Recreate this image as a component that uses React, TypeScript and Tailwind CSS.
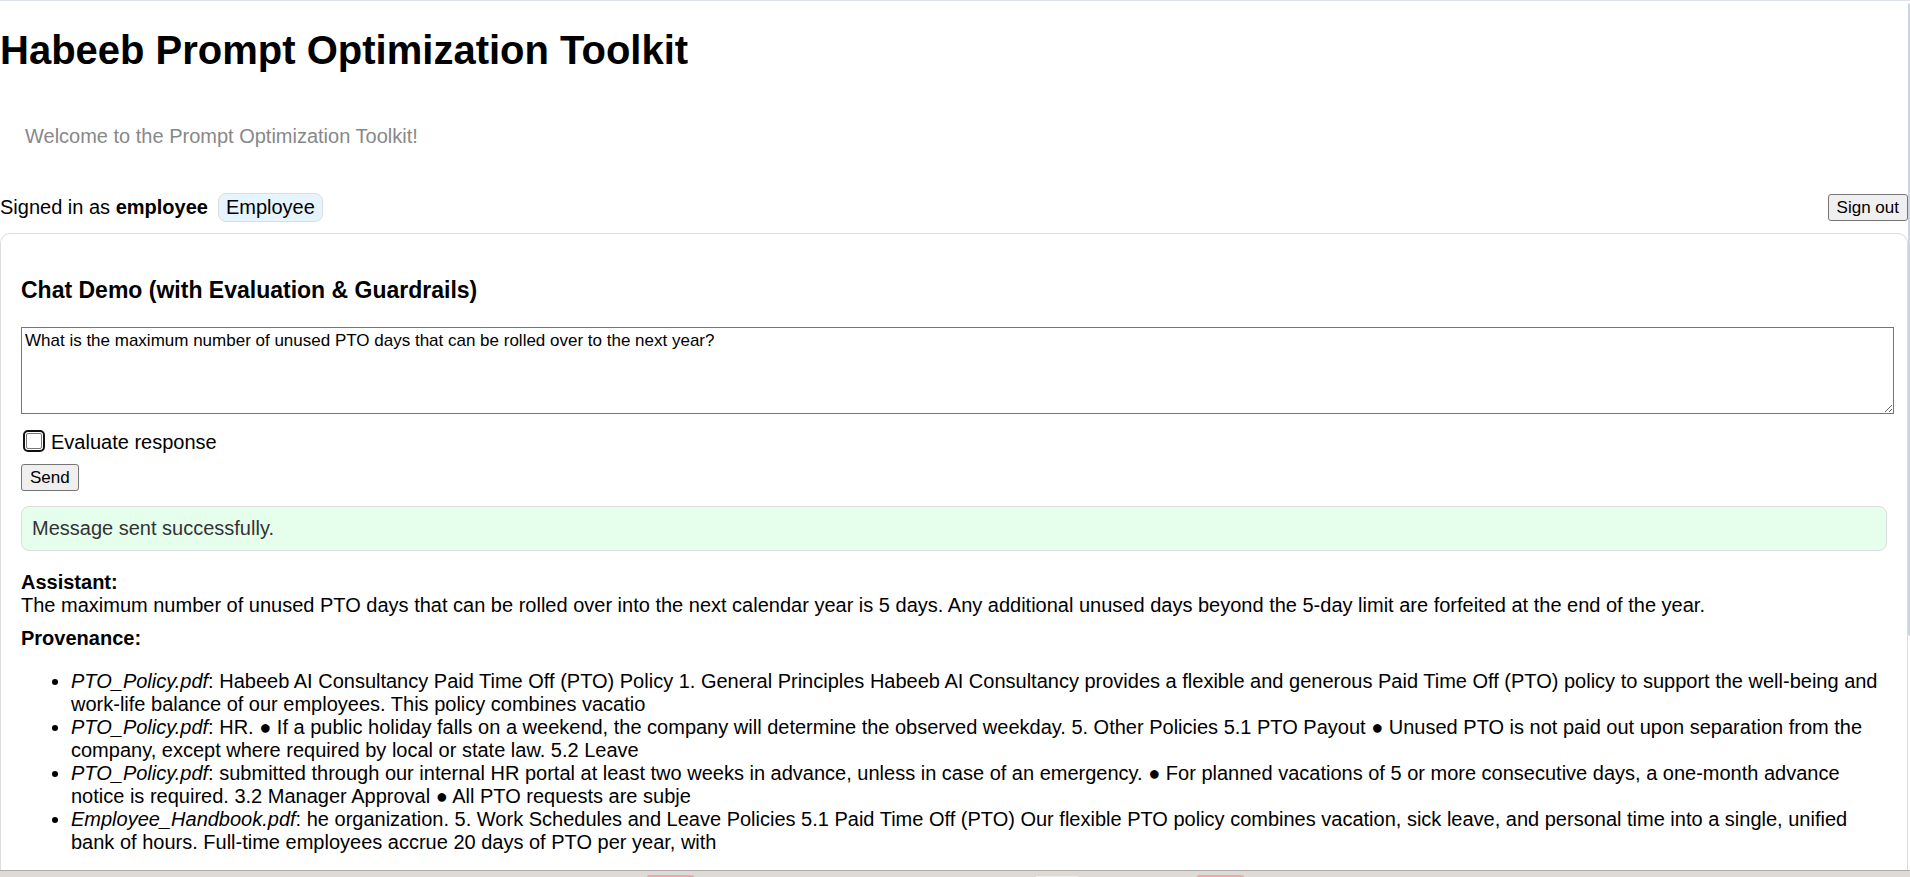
import { useState } from "react";

const sources = [
  {
    file: "PTO_Policy.pdf",
    text: "Habeeb AI Consultancy Paid Time Off (PTO) Policy 1. General Principles Habeeb AI Consultancy provides a flexible and generous Paid Time Off (PTO) policy to support the well-being and work-life balance of our employees. This policy combines vacatio",
  },
  {
    file: "PTO_Policy.pdf",
    text: "HR. ● If a public holiday falls on a weekend, the company will determine the observed weekday. 5. Other Policies 5.1 PTO Payout ● Unused PTO is not paid out upon separation from the company, except where required by local or state law. 5.2 Leave",
  },
  {
    file: "PTO_Policy.pdf",
    text: "submitted through our internal HR portal at least two weeks in advance, unless in case of an emergency. ● For planned vacations of 5 or more consecutive days, a one-month advance notice is required. 3.2 Manager Approval ● All PTO requests are subje",
  },
  {
    file: "Employee_Handbook.pdf",
    text: "he organization. 5. Work Schedules and Leave Policies 5.1 Paid Time Off (PTO) Our flexible PTO policy combines vacation, sick leave, and personal time into a single, unified bank of hours. Full-time employees accrue 20 days of PTO per year, with",
  },
];

const buttonClass =
  "h-[27px] rounded-[3px] border border-[#767676] bg-[#efefef] px-2 text-[17px] leading-[19px] text-black";

export default function App() {
  const [message, setMessage] = useState(
    "What is the maximum number of unused PTO days that can be rolled over to the next year?",
  );
  const [evaluate, setEvaluate] = useState(false);

  return (
    <div className="flex min-h-screen flex-col bg-white font-['Liberation_Sans',Arial,sans-serif] text-[20px] leading-[23px] text-black">
      <div className="flex flex-1 border-t border-[#dde1ea]">
        <div className="flex min-w-0 flex-1 flex-col">
          <h1 className="mt-[26px] text-[40px] leading-[46px] font-bold">
            Habeeb Prompt Optimization Toolkit
          </h1>
          <p className="mt-[27px] p-[25px] text-[#888888]">
            Welcome to the Prompt Optimization Toolkit!
          </p>
          <div className="mt-5 mb-[11px] flex items-center justify-between">
            <div className="flex items-center">
              <span>
                Signed in as <strong>employee</strong>
              </span>
              <span className="ml-[10px] rounded-[8px] border border-[#dddddd] bg-[#e6f4ff] px-[7px] py-[3px] leading-[21px]">
                Employee
              </span>
            </div>
            <button type="button" className={buttonClass}>
              Sign out
            </button>
          </div>

          <main className="flex-1 rounded-t-[10px] border border-b-0 border-[#dddddd] px-5 pt-5 pb-4">
            <h3 className="mt-[23px] mb-6 text-[23px] leading-[26px] font-bold">
              Chat Demo (with Evaluation &amp; Guardrails)
            </h3>
            <textarea
              aria-label="Message"
              value={message}
              onChange={(e) => setMessage(e.target.value)}
              className="block h-[87px] w-[calc(100%+7px)] resize border border-[#767676] bg-white px-[3px] py-[3px] text-[17px] leading-[19px] text-black outline-none"
            />
            <label className="mt-[17px] flex items-center">
              <input
                type="checkbox"
                checked={evaluate}
                onChange={(e) => setEvaluate(e.target.checked)}
                className="mr-[9px] mb-[3px] ml-[5px] size-4 appearance-none rounded-[2px] border border-[#767676] bg-white outline-2 outline-offset-1 outline-[#101010] checked:bg-[#0075ff]"
              />
              Evaluate response
            </label>
            <button type="button" className={`${buttonClass} mt-[10px] block`}>
              Send
            </button>
            <div
              role="status"
              className="mt-[15px] rounded-[8px] border border-[#dddddd] bg-[#e6ffed] p-[10px] text-[#333333]"
            >
              Message sent successfully.
            </div>
            <div className="mt-5">
              <strong>Assistant:</strong>
              <p>
                The maximum number of unused PTO days that can be rolled over into the next calendar
                year is 5 days. Any additional unused days beyond the 5-day limit are forfeited at the
                end of the year.
              </p>
            </div>
            <div className="mt-[10px]">
              <strong>Provenance:</strong>
              <ul className="mt-5 list-disc pl-[50px]">
                {sources.map((source, i) => (
                  <li key={i}>
                    <em>{source.file}</em>
                    {`: ${source.text}`}
                  </li>
                ))}
              </ul>
            </div>
          </main>
        </div>
        <div className="w-[2px] pt-[2px]">
          <div className="h-[73%] rounded-l-[2px] bg-[#c9d5e2]" />
        </div>
      </div>
      <div className="flex h-[7px] items-end border-t border-[#aeaba8] bg-[#dedad6]">
        <div className="ml-[33.9%] h-[2px] w-[47px] rounded-t-[2px] bg-[#eda9a7]" />
        <div className="ml-[17.9%] h-px w-[42px] bg-[#efedeb]" />
        <div className="ml-[6.2%] h-[2px] w-[47px] rounded-t-[2px] bg-[#eda9a7]" />
      </div>
    </div>
  );
}
